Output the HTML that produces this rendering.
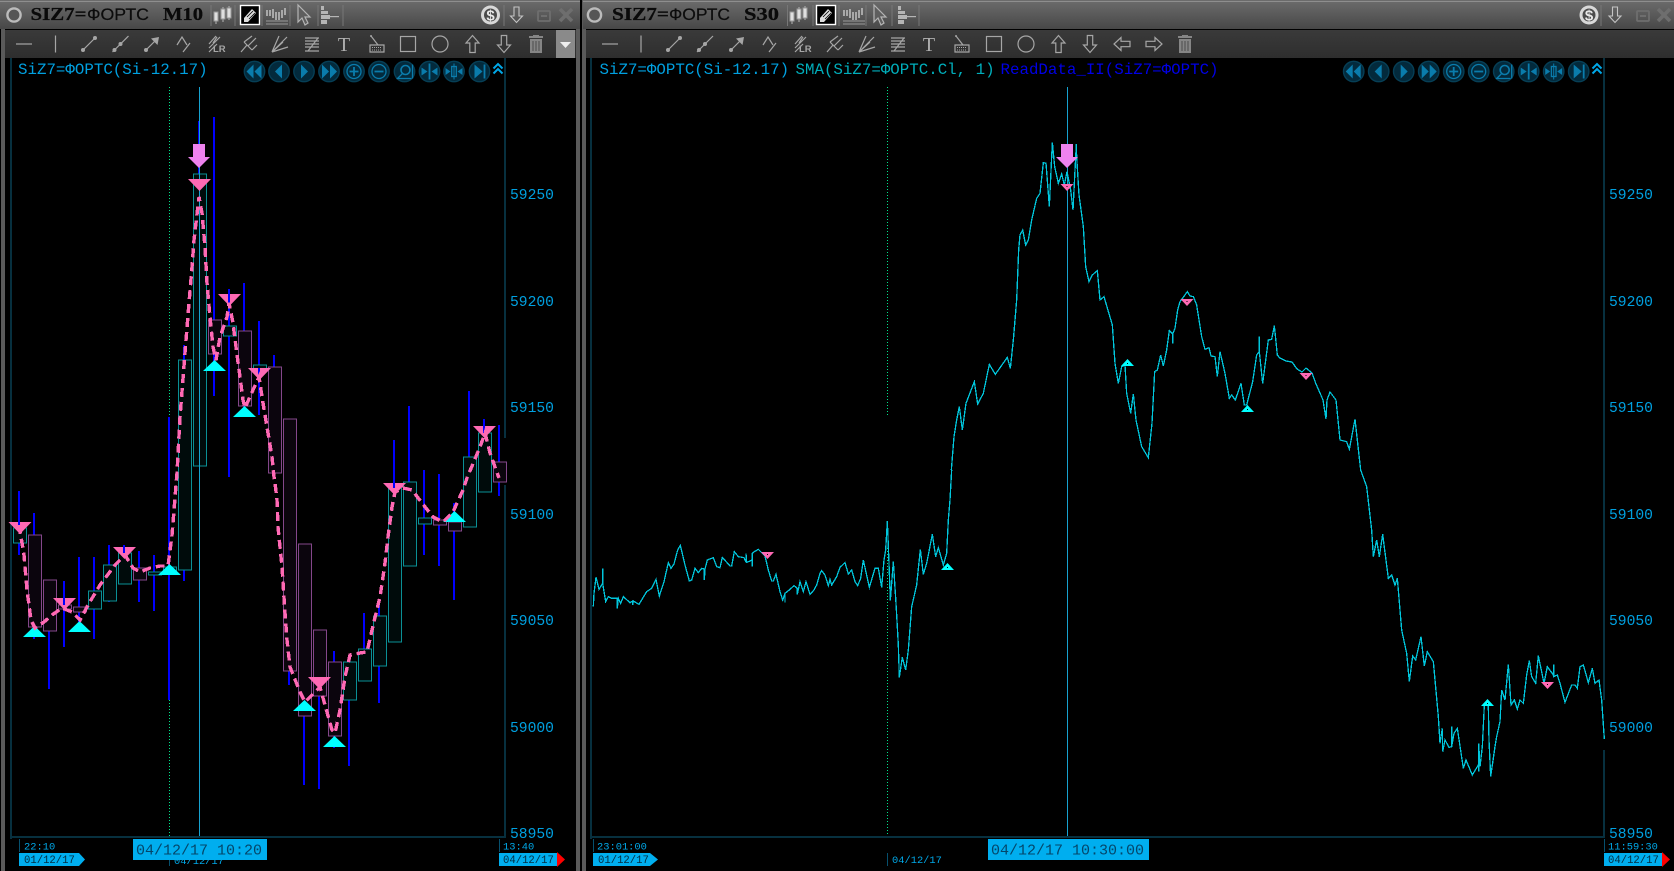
<!DOCTYPE html>
<html lang="ru">
<head>
<meta charset="utf-8">
<title>SIZ7 charts</title>
<style>
html,body{margin:0;padding:0;background:#000;overflow:hidden;width:1674px;height:871px}
svg{display:block}
.m{font-family:"Liberation Mono","DejaVu Sans Mono",monospace}
.ax{font-size:14.67px;fill:#00a0e0}
.hd{font-size:15.8px}
.sm{font-size:10.4px;fill:#00a8e8}
.dk{font-size:10.6px;fill:#032c40}
.bg{font-size:15px;fill:#04466a}
.ts{font-family:"Liberation Serif",serif;font-weight:bold;font-size:17.5px;fill:#0a0a0a;stroke:#0a0a0a;stroke-width:.25}
.tn{font-family:"Liberation Sans",sans-serif;font-size:16.5px;fill:#0c0c0c;stroke:#0c0c0c;stroke-width:.2}
.i{fill:none;stroke:#a6a6a6;stroke-width:1.2}
.j{fill:#a6a6a6;stroke:none}
</style>
</head>
<body>
<svg width="1674" height="871" viewBox="0 0 1674 871" xmlns="http://www.w3.org/2000/svg">
<defs>
<linearGradient id="tb" x1="0" y1="0" x2="0" y2="1">
<stop offset="0" stop-color="#6c6c6c"/><stop offset=".45" stop-color="#5c5c5c"/><stop offset="1" stop-color="#474747"/>
</linearGradient>
<linearGradient id="tl" x1="0" y1="0" x2="0" y2="1">
<stop offset="0" stop-color="#3a3a3a"/><stop offset="1" stop-color="#2e2e2e"/>
</linearGradient>

<!-- title icons -->
<g id="tCand" fill="#b5b5b5" stroke="#b5b5b5">
<path d="M-7 -3V9M0 -8V7M6 -9V5" stroke-width="1" fill="none"/>
<rect x="-9" y="-3" width="4" height="9" fill="#e0e0e0" stroke="#999"/>
<rect x="-2" y="-6" width="4" height="10" fill="#e0e0e0" stroke="#999"/>
<rect x="4" y="-7" width="4" height="10" fill="#e0e0e0" stroke="#999"/>
</g>
<g id="tPen">
<rect x="-9.5" y="-9.5" width="19" height="19" fill="#000" stroke="#fff" stroke-width="1.4"/>
<path d="M-6 3L2 -6L6 -2L-2 7L-6 7Z" fill="#ddd"/>
<path d="M-3 2L3 -4M-1 4L5 -2" stroke="#000" stroke-width=".8"/>
</g>
<g id="tBars" fill="none" stroke="#bbb">
<path d="M-10 -5V1M-7 -5V1M-4 -6V3M-1 -3V5M2 -3V5M5 -5V3M8 -7V0" stroke-width="1.6"/>
<path d="M-11 6H11M-11 9H11" stroke="#999"/>
</g>
<g id="tCur"><path d="M-6 -10V7L-2 3L1 10L4 8L1 2L6 2Z" fill="#5e5e5e" stroke="#b4b4b4" stroke-width="1.2"/></g>
<g id="tGraph" fill="#b5b5b5">
<rect x="-9" y="-9" width="3" height="4"/><rect x="-9" y="-4" width="7" height="3"/>
<rect x="-9" y="0" width="9" height="4"/><rect x="0" y="1" width="9" height="1.2"/>
<rect x="-9" y="5" width="6" height="4"/>
</g>
<g id="tDl"><path d="M-2.5 -8H2.5V1H6L0 7.5L-6 1H-2.5Z" fill="none" stroke="#c4c4c4" stroke-width="1.1"/></g>
<g id="tMin"><rect x="-6" y="-5" width="12" height="10" rx="1" fill="none" stroke="#6e6e6e" stroke-width="1.8"/><rect x="-3" y="-1" width="6" height="2" fill="#6e6e6e"/></g>
<g id="tX"><path d="M-6 -6L6 6M6 -6L-6 6" stroke="#6e6e6e" stroke-width="3.6"/></g>

<!-- drawing tools -->
<g id="aDash"><path class="i" d="M-8 0H8"/></g>
<g id="aV"><path class="i" d="M0 -8.5V8.5"/></g>
<g id="aSeg"><path class="i" d="M-6 6L6 -6"/><circle class="j" cx="-6" cy="6" r="2"/><circle class="j" cx="6" cy="-6" r="2"/></g>
<g id="aRay"><path class="i" d="M-8 8L8 -8"/><circle class="j" cx="-6" cy="6" r="2"/><circle class="j" cx="0" cy="0" r="2"/></g>
<g id="aArr"><path class="i" d="M-6 6L4 -4"/><circle class="j" cx="-6" cy="6" r="2"/><path class="j" d="M7 -7L5.5 1L-1 -5.5Z"/></g>
<g id="aZig"><path class="i" d="M-7 1L-2 -7L3 1M-1 8L6 -1"/></g>
<g id="aLR"><path class="i" d="M-8 4L3 -7M-8 8L0 0M-4 -1L0 -7M-8 0L-1 -8"/><text x="-4" y="8" font-family="Liberation Sans,sans-serif" font-size="9.5" font-weight="bold" fill="#a6a6a6">LR</text></g>
<g id="aFk"><path class="i" d="M-8 8L-2 1M-5 -2L3 6M-5 -2L3 -8M-1 2L7 -6M3 6L8 1"/></g>
<g id="aFan"><path class="i" d="M-8 8L-1 -8M-8 8L7 -7M-8 8L8 3M-8 8L3 -2"/></g>
<g id="aFib"><path class="i" d="M-7 -6H7M-7 -3H7M-7 0H7M-7 3H7M-7 7H7M-4 7L6 -6"/></g>
<g id="aT"><text x="0" y="7" text-anchor="middle" font-family="Liberation Serif,serif" font-size="20" fill="#b0b0b0">T</text></g>
<g id="aKbd"><path class="i" d="M-7 1H7V8H-7ZM-6 -8L1 1"/><circle class="j" cx="-6" cy="-8" r="1"/><path d="M-5 3.5H5M-5 6H5" stroke="#a6a6a6" stroke-dasharray="1 1"/></g>
<g id="aRect"><rect class="i" x="-7.5" y="-7.5" width="15" height="15"/></g>
<g id="aCirc"><circle class="i" cx="0" cy="0" r="8"/></g>
<g id="aUp"><path class="i" d="M-2.7 8.5H2.7V-1H6.5L0 -8.5L-6.5 -1H-2.7Z"/></g>
<g id="aDn"><path class="i" d="M-2.7 -8.5H2.7V1H6.5L0 8.5L-6.5 1H-2.7Z"/></g>
<g id="aLf"><path class="i" d="M8 -2.7V2.7H-1V6.5L-8 0L-1 -6.5V-2.7Z"/></g>
<g id="aRt"><path class="i" d="M-8 -2.7V2.7H1V6.5L8 0L1 -6.5V-2.7Z"/></g>
<g id="aTr"><path d="M-7 -6H7V-8H3V-9H-3V-8H-7Z M-6 -5H6V9H-6Z" fill="#858585"/><path d="M-3 -3V7M0 -3V7M3 -3V7" stroke="#4a4a4a"/></g>

<!-- navigation buttons -->
<g id="nb"><circle r="10.2" fill="#032a3c" stroke="#063f56" stroke-width="1.4"/></g>
<g id="n1"><use href="#nb"/><path d="M-1 -7V7L-8 0ZM7 -7V7L0 0Z" fill="#0a7cac"/></g>
<g id="n2"><use href="#nb"/><path d="M3 -7V7L-4 0Z" fill="#0a7cac"/></g>
<g id="n3"><use href="#nb"/><path d="M-3 -7V7L4 0Z" fill="#0a7cac"/></g>
<g id="n4"><use href="#nb"/><path d="M1 -7V7L8 0ZM-7 -7V7L0 0Z" fill="#0a7cac"/></g>
<g id="n5"><use href="#nb"/><circle r="7" fill="none" stroke="#0a7cac" stroke-width="1.3"/><path d="M-4.5 0H4.5M0 -4.5V4.5" stroke="#0a7cac" stroke-width="1.8"/></g>
<g id="n6"><use href="#nb"/><circle r="7" fill="none" stroke="#0a7cac" stroke-width="1.3"/><path d="M-4.5 0H4.5" stroke="#0a7cac" stroke-width="1.8"/></g>
<g id="n7"><use href="#nb"/><circle cx="1" cy="-1.5" r="4.5" fill="none" stroke="#0a7cac" stroke-width="1.6"/><path d="M-2 2L-7 7M-8 7H7M8 -7V7" stroke="#0a7cac" stroke-width="1.3" fill="none"/></g>
<g id="n8"><use href="#nb"/><path d="M0 -8V8" stroke="#0a7cac" stroke-width="1.8"/><path d="M-8 -4L-2 0L-8 4ZM8 -4L2 0L8 4Z" fill="#0a7cac"/></g>
<g id="n9"><use href="#nb"/><rect x="-2.3" y="-5" width="4.6" height="10" fill="none" stroke="#0a7cac" stroke-width="1.3"/><path d="M0 -8V8" stroke="#0a7cac"/><path d="M-8.5 -3.5L-3.5 0L-8.5 3.5ZM8.5 -3.5L3.5 0L8.5 3.5Z" fill="#0a7cac"/></g>
<g id="n10"><use href="#nb"/><path d="M-5 -7V7L3 0Z" fill="#0a7cac"/><path d="M5 -7V7" stroke="#0a7cac" stroke-width="1.8"/></g>
<g id="chev"><path d="M-4.5 -1L0 -5.5L4.5 -1M-4.5 4L0 -.5L4.5 4" fill="none" stroke="#00a8e8" stroke-width="2"/></g>

<g id="bigArr"><path d="M-6 -12H6V1H11L0 12L-11 1H-6Z" fill="#ee82ee"/></g>
<g id="pT"><path d="M-11.5 0H11.500L0 12Z" fill="#ff69b4"/></g>
<g id="cT"><path d="M-11.5 11H11.5L0 0Z" fill="#00ffff"/></g>
<g id="pS"><path d="M-6.5 0H6.5L0 7Z" fill="#ff69b4"/><rect x="-.5" y="2" width="1" height="1" fill="#000"/></g>
<g id="cS"><path d="M-6.5 7H6.5L0 0Z" fill="#00ffff"/><rect x="-.5" y="4" width="1" height="1" fill="#000"/></g>
</defs>

<rect width="1674" height="871" fill="#000"/>

<!-- window chrome -->
<rect x="1" y="0" width="4" height="871" fill="#5a5a5a"/>
<rect x="576" y="0" width="4" height="871" fill="#5a5a5a"/>
<rect x="582" y="0" width="4" height="871" fill="#5a5a5a"/>

<rect x="0" y="0" width="580" height="29" fill="url(#tb)"/>
<rect x="0" y="1" width="580" height="1" fill="#8e8e8e"/>
<rect x="583" y="0" width="1091" height="29" fill="url(#tb)"/>
<rect x="583" y="1" width="1091" height="1" fill="#8e8e8e"/>
<rect x="5" y="29" width="571" height="1" fill="#000"/>
<rect x="586" y="29" width="1088" height="1" fill="#000"/>
<rect x="5" y="30" width="571" height="28" fill="url(#tl)"/>
<rect x="586" y="30" width="1088" height="28" fill="url(#tl)"/>
<rect x="556" y="30" width="19" height="28" fill="#8a8a8a"/>
<path d="M560 42H571L565.500 48Z" fill="#efefef"/>

<!-- title left -->
<circle cx="14" cy="15" r="6.6" fill="#555" stroke="#bcbcbc" stroke-width="2.4"/>
<text class="ts" x="30.500" y="20" textLength="56" lengthAdjust="spacingAndGlyphs">SIZ7=</text>
<text class="tn" x="87" y="20" textLength="62" lengthAdjust="spacingAndGlyphs">ФОРТС</text>
<text class="ts" x="163" y="20" textLength="40" lengthAdjust="spacingAndGlyphs">M10</text>
<path d="M211 5V26M235 5V26M262 5V26M290 5V26M318 5V26M343 5V26M504 5V26" stroke="#777"/>
<use href="#tCand" x="223" y="15"/><use href="#tPen" x="250" y="15"/><use href="#tBars" x="277" y="15"/><use href="#tCur" x="304" y="15"/><use href="#tGraph" x="330" y="15"/>
<circle cx="490.500" cy="15" r="9.500" fill="#d8d8d8"/>
<circle cx="490.500" cy="15" r="6.500" fill="#4a4a4a"/>
<text x="490.500" y="20.500" text-anchor="middle" font-family="Liberation Sans,sans-serif" font-weight="bold" font-size="15" fill="#e8e8e8">$</text>
<use href="#tDl" x="516.500" y="15"/><use href="#tMin" x="544" y="16"/><use href="#tX" x="566" y="15"/>

<!-- title right -->
<circle cx="594.500" cy="15" r="6.600" fill="#555" stroke="#bcbcbc" stroke-width="2.400"/>
<text class="ts" x="612" y="20" textLength="57" lengthAdjust="spacingAndGlyphs">SIZ7=</text>
<text class="tn" x="669" y="20" textLength="61" lengthAdjust="spacingAndGlyphs">ФОРТС</text>
<text class="ts" x="744" y="20" textLength="35" lengthAdjust="spacingAndGlyphs">S30</text>
<path d="M787.500 5V26M813 5V26M839 5V26M866 5V26M892 5V26M919 5V26M1601 5V26" stroke="#777"/>
<use href="#tCand" x="799" y="15"/><use href="#tPen" x="826" y="15"/><use href="#tBars" x="854" y="15"/><use href="#tCur" x="880" y="15"/><use href="#tGraph" x="907" y="15"/>
<circle cx="1589" cy="15" r="9.500" fill="#d8d8d8"/>
<circle cx="1589" cy="15" r="6.500" fill="#4a4a4a"/>
<text x="1589" y="20.500" text-anchor="middle" font-family="Liberation Sans,sans-serif" font-weight="bold" font-size="15" fill="#e8e8e8">$</text>
<use href="#tDl" x="1615" y="15"/><use href="#tMin" x="1643" y="16"/><use href="#tX" x="1664" y="15"/>

<!-- toolbar left -->
<g transform="translate(0 44)">
<use href="#aDash" x="24"/><use href="#aV" x="55.500"/><use href="#aSeg" x="89"/><use href="#aRay" x="120.500"/><use href="#aArr" x="152"/><use href="#aZig" x="184"/><use href="#aLR" x="217"/><use href="#aFk" x="249"/><use href="#aFan" x="280"/><use href="#aFib" x="312"/><use href="#aT" x="344"/><use href="#aKbd" x="377"/><use href="#aRect" x="408"/><use href="#aCirc" x="440"/><use href="#aUp" x="472.500"/><use href="#aDn" x="504"/><use href="#aTr" x="536"/>
</g>
<!-- toolbar right -->
<g transform="translate(0 44)">
<use href="#aDash" x="610"/><use href="#aV" x="641"/><use href="#aSeg" x="674"/><use href="#aRay" x="705"/><use href="#aArr" x="737"/><use href="#aZig" x="770"/><use href="#aLR" x="803"/><use href="#aFk" x="835"/><use href="#aFan" x="867"/><use href="#aFib" x="898"/><use href="#aT" x="929"/><use href="#aKbd" x="962"/><use href="#aRect" x="994"/><use href="#aCirc" x="1026"/><use href="#aUp" x="1058.500"/><use href="#aDn" x="1090"/><use href="#aLf" x="1122"/><use href="#aRt" x="1154"/><use href="#aTr" x="1185"/>
</g>

<!-- frames -->
<g fill="#07303f" shape-rendering="crispEdges">
<rect x="10" y="58" width="2" height="781"/>
<rect x="504" y="58" width="2" height="380"/><rect x="504" y="485" width="2" height="353"/>
<rect x="10" y="836" width="496" height="2"/>
<rect x="590" y="58" width="2" height="781"/>
<rect x="1603" y="58" width="2" height="642"/><rect x="1603" y="750" width="2" height="88"/>
<rect x="590" y="836" width="1015" height="2"/>
</g>

<!-- chart headers -->
<text class="m hd" x="18" y="74" fill="#00a0e0">SiZ7=ФОРТС(Si-12.17)</text>
<text class="m hd" x="599.500" y="74" fill="#00a0e0">SiZ7=ФОРТС(Si-12.17)</text>
<text class="m hd" x="795.500" y="74" fill="#00aebb">SMA(SiZ7=ФОРТС.Cl, 1)</text>
<text class="m hd" x="1000.500" y="74" fill="#0000e6">ReadData_II(SiZ7=ФОРТС)</text>

<!-- nav buttons -->
<g transform="translate(0 71.500)">
<use href="#n1" x="254.500"/><use href="#n2" x="279"/><use href="#n3" x="304"/><use href="#n4" x="329"/><use href="#n5" x="354"/><use href="#n6" x="379"/><use href="#n7" x="404.500"/><use href="#n8" x="429.500"/><use href="#n9" x="454"/><use href="#n10" x="479.500"/>
<use href="#chev" x="498" y="-2"/>
<use href="#n1" x="1353.700"/><use href="#n2" x="1378.700"/><use href="#n3" x="1403.700"/><use href="#n4" x="1428.700"/><use href="#n5" x="1453.700"/><use href="#n6" x="1478.700"/><use href="#n7" x="1503.700"/><use href="#n8" x="1528.700"/><use href="#n9" x="1553.700"/><use href="#n10" x="1578.700"/>
<use href="#chev" x="1597" y="-2"/>
</g>

<!-- axis labels -->
<g class="m ax">
<text x="510" y="199">59250</text><text x="510" y="306">59200</text><text x="510" y="412">59150</text><text x="510" y="519">59100</text><text x="510" y="625">59050</text><text x="510" y="732">59000</text><text x="510" y="838">58950</text>
<text x="1609" y="199">59250</text><text x="1609" y="306">59200</text><text x="1609" y="412">59150</text><text x="1609" y="519">59100</text><text x="1609" y="625">59050</text><text x="1609" y="732">59000</text><text x="1609" y="838">58950</text>
</g>

<!-- left chart -->
<g shape-rendering="crispEdges">
<path d="M169.500 87V415M169.500 700V836" stroke="#00e58a" stroke-width="1" stroke-dasharray="1 2" fill="none"/>
<path d="M887.500 87V415M887.500 548V836" stroke="#00e58a" stroke-width="1" stroke-dasharray="1 2" fill="none"/>

<path fill="none" stroke="#0000ff" stroke-width="2" d="M19 491V555M34 513V639M49 631V689M64 581V647M79 557V622M94 557V639M109 545V602M124 545V584M139 551V602M154 555V611M169 417V700M184 345V581M199 121V174M214 117V396M229 289V477M244 283V415M259 321V415M274 355V477M289 671V685M304 716V785M319 696V789M334 651V748M349 655V766M364 613V681M379 600V703M394 440V642M409 406V566M424 470V555M439 474V566M454 503V600M469 391V527M484 419V492M499 425V496"/>

<path fill="#000b0b" stroke="#0a8f95" stroke-width="1" d="M13.500 528h13v15h-13zM88.500 591h13v18h-13zM103.500 565h13v36h-13zM118.500 553h13v31h-13zM148.500 572h13v3h-13zM163.500 567h13v5h-13zM178.500 360h13v210h-13zM193.500 174h13v292h-13zM223.500 326h13v10h-13zM253.500 365h13v4h-13zM343.500 662h13v38h-13zM358.500 649h13v32h-13zM373.500 616h13v50h-13zM388.500 488h13v154h-13zM403.500 482h13v84h-13zM418.500 518h13v6h-13zM463.500 457h13v70h-13zM478.500 433h13v59h-13z"/>
<path fill="#0b050d" stroke="#84478a" stroke-width="1" d="M28.500 535h13v92h-13zM43.500 580h13v51h-13zM58.500 605h13v4h-13zM73.500 607h13v5h-13zM133.500 568h13v12h-13zM208.500 320h13v34h-13zM238.500 331h13v75h-13zM268.500 367h13v106h-13zM283.500 419h13v252h-13zM298.500 544h13v172h-13zM313.500 630h13v66h-13zM328.500 662h13v74h-13zM433.500 520h13v5h-13zM448.500 522h13v9h-13zM493.500 462h13v20h-13z"/>
</g>

<rect x="199" y="87" width="1" height="749" fill="#17a2d0"/>
<rect x="1067" y="87" width="1" height="749" fill="#17a2d0"/>

<use href="#pT" x="20" y="522"/><use href="#pT" x="64.500" y="598"/><use href="#pT" x="124.500" y="547"/><use href="#pT" x="199.500" y="179"/><use href="#pT" x="229.500" y="294"/><use href="#pT" x="259.500" y="368"/><use href="#pT" x="319.500" y="677"/><use href="#pT" x="394.500" y="483"/><use href="#pT" x="484.500" y="426"/>
<use href="#cT" x="34.500" y="626"/><use href="#cT" x="79.500" y="621"/><use href="#cT" x="169.500" y="564"/><use href="#cT" x="214.500" y="360"/><use href="#cT" x="244.500" y="406"/><use href="#cT" x="304.500" y="700"/><use href="#cT" x="334.500" y="736"/><use href="#cT" x="454.500" y="511"/>

<path shape-rendering="crispEdges" fill="none" stroke="#0000ff" stroke-width="2" d="M19 522V528M64 598V605M124 547V553M229 294V310M259 368V378M394 483V488M484 426V433"/>

<polyline shape-rendering="crispEdges" fill="none" stroke="#ff69b4" stroke-width="3.400" stroke-dasharray="9 5" points="19,525 24,555 27,590 31,620 35,628 44,622 52,615 62,608 72,612 80,620 88,605 100,585 115,565 125,555 133,568 140,572 150,568 160,566 168,566 172,535 177,473 180,417 186,340 189,303 192,267 194,240 199,197 202,213 205,247 207,283 210,317 213,347 216,360 220,337 227,317 229,303 233,323 236,347 240,377 243,400 245,408 253,390 259,377 263,403 267,427 272,457 274,477 275,483 277,500 278,527 282,567 285,613 287,640 290,667 300,692 305,702 312,695 320,687 325,705 332,730 335,733 340,710 345,677 350,655 360,653 367,652 372,630 380,597 385,563 388,537 392,507 395,492 403,488 412,490 422,503 433,517 443,522 453,512 463,490 467,478 480,447 485,433 490,453 499,478"/>

<use href="#bigArr" x="199" y="156"/>

<!-- right chart line -->
<g fill="none" stroke="#00c6dc" stroke-width="1.300" shape-rendering="crispEdges">
<g transform="translate(590 470) scale(.33333)">
<polyline vector-effect="non-scaling-stroke" points="10,410 12,370 18,322 27,358 38,340 38,295 38,340 47,395 55,380 65,385 82,385 82,415 85,385 92,400 100,380 120,398 128,393 128,405 130,393 147,403 170,365 185,355 198,328 208,378 222,335 235,278 243,295 252,282 263,240 271,226 285,285 298,333 305,330 315,295 325,308 335,295 343,297 343,330 345,297 352,270 370,263 380,290 390,293 397,262 420,288 425,288 433,245 445,260 462,263 468,277 468,250 470,277 487,270 487,290 487,250 493,245 505,238 525,258 535,300 545,333 550,333 558,313 570,365 578,390 585,370 585,398 585,370 600,358 612,347 622,355 622,373 630,335 640,365 648,335 660,373 672,360 680,345 690,310 695,302 705,315 715,347 720,328 725,345 740,320 750,292 765,278 775,312 785,300 795,335 803,347 812,325 820,270 838,352 855,295 865,295 875,352 882,270 887,240 892,153 897,280 901,392 910,275 918,400 925,525 928,622 937,562 947,600 955,540 965,410 972,380 980,345 991,238 1000,313 1010,280 1027,193 1037,260 1045,233 1060,285 1070,250 1075,150 1080,90 1085,0"/>
</g>
<g transform="translate(880 80) scale(.33333)">
<polyline vector-effect="non-scaling-stroke" points="214,1170 222,1070 230,1020 238,980 247,1050 258,970 283,905 293,972 310,940 328,853 346,883 382,832 391,865 400,780 410,660 416,510 420,465 428,450 437,495 445,480 455,420 470,355 480,340 490,248 498,250 508,380 517,187 524,260 535,310 545,282 553,315 561,275 572,330 579,390 589,192 590,230 597,345 610,440 617,560 627,605 637,585 652,572 660,660 672,650 697,735 705,850 715,910 725,860 735,855 740,940 752,1000 760,942 768,1020 785,1100 805,1133 816,1030 824,875 832,870 842,825 850,858 860,810 868,752 878,762 878,790 878,762 885,745 893,690 900,665 922,635 930,648 940,650 950,675 965,770 975,808 987,803 993,828 1005,830 1012,890 1020,815 1035,880 1048,955 1055,945 1066,960 1083,910 1093,975 1100,975 1118,905 1130,825 1138,815 1138,770 1138,815 1148,910 1165,780 1175,778 1183,737 1192,825 1200,835"/>
</g>
<polyline points="1280,358 1286,361 1292,362 1297,369 1302,372 1306,368 1312,373 1316,384 1320,393 1323,400 1326,419 1327,400 1330,392 1336,400"/>
<g transform="translate(1270 400) scale(.33333)">
<polyline vector-effect="non-scaling-stroke" points="198,0 210,120 230,125 238,148 255,58 272,210 290,260 305,390 310,470 320,420 328,470 338,403 355,535 365,525 375,555 382,535 395,690 410,760 418,845 428,768 437,780 453,710 463,798 472,755 490,785 505,950 510,1030 517,985 518,1055 525,1020 537,1042 545,1040 545,980 545,1040 552,1000 562,985 580,1105 588,1080 607,1125 625,1095 626,1115 626,1030 630,1100 637,1040 643,915 650,910 655,920 657,1020 662,1130 675,1040 680,1010 690,965 695,870 705,900 715,793 723,915 733,900 742,927 750,900 760,910 770,825 778,782 785,830 797,850 805,767 822,850 832,800 850,825 851,793 851,830 862,825 870,850 885,907 905,855 915,855 922,865 930,800 940,795 955,848 967,805 975,850 987,840 995,900 1003,1017"/>
</g>
</g>

<use href="#bigArr" x="1067" y="156"/>
<use href="#pS" x="1067" y="184"/><use href="#pS" x="1187" y="299"/><use href="#pS" x="767.500" y="552"/><use href="#pS" x="1547.500" y="682"/><use href="#pS" x="1306" y="373"/>
<use href="#cS" x="1127.500" y="359"/><use href="#cS" x="1247.500" y="405"/><use href="#cS" x="947.500" y="563"/><use href="#cS" x="1487.500" y="699"/>

<!-- time axis left -->
<g shape-rendering="crispEdges" fill="#06506e">
<rect x="19" y="839" width="1" height="13"/><rect x="169" y="853" width="1" height="13"/><rect x="499" y="839" width="1" height="13"/>
<rect x="593" y="839" width="1" height="13"/><rect x="887" y="853" width="1" height="13"/><rect x="1604" y="839" width="1" height="13"/>
</g>
<text class="m sm" x="24" y="849.500">22:10</text>
<text class="m sm" x="503" y="849.500">13:40</text>
<text class="m sm" x="174" y="864">04/12/17</text>
<path d="M19 853H79L85 859.500L79 866H19Z" fill="#00aeef"/>
<text class="m dk" x="24" y="863">01/12/17</text>
<rect x="499" y="853" width="58" height="13" fill="#00aeef"/>
<path d="M557 852L565 859.500L557 867Z" fill="#ff0000"/>
<text class="m dk" x="503" y="863">04/12/17</text>
<rect x="133" y="839" width="134" height="21" fill="#00aeef"/>
<text class="m bg" x="136" y="854.500">04/12/17 10:20</text>

<!-- time axis right -->
<text class="m sm" x="597" y="849.500">23:01:00</text>
<text class="m sm" x="1608" y="849.500">11:59:30</text>
<path d="M593 853H650L658 859.500L650 866H593Z" fill="#00aeef"/>
<text class="m dk" x="598" y="863">01/12/17</text>
<text class="m sm" x="892" y="863">04/12/17</text>
<rect x="988" y="839" width="161" height="21" fill="#00aeef"/>
<text class="m bg" x="991" y="854.500">04/12/17 10:30:00</text>
<rect x="1604" y="853" width="58" height="13" fill="#00aeef"/>
<path d="M1662 852L1670 859.500L1662 867Z" fill="#ff0000"/>
<text class="m dk" x="1608" y="863">04/12/17</text>
</svg>
</body>
</html>
